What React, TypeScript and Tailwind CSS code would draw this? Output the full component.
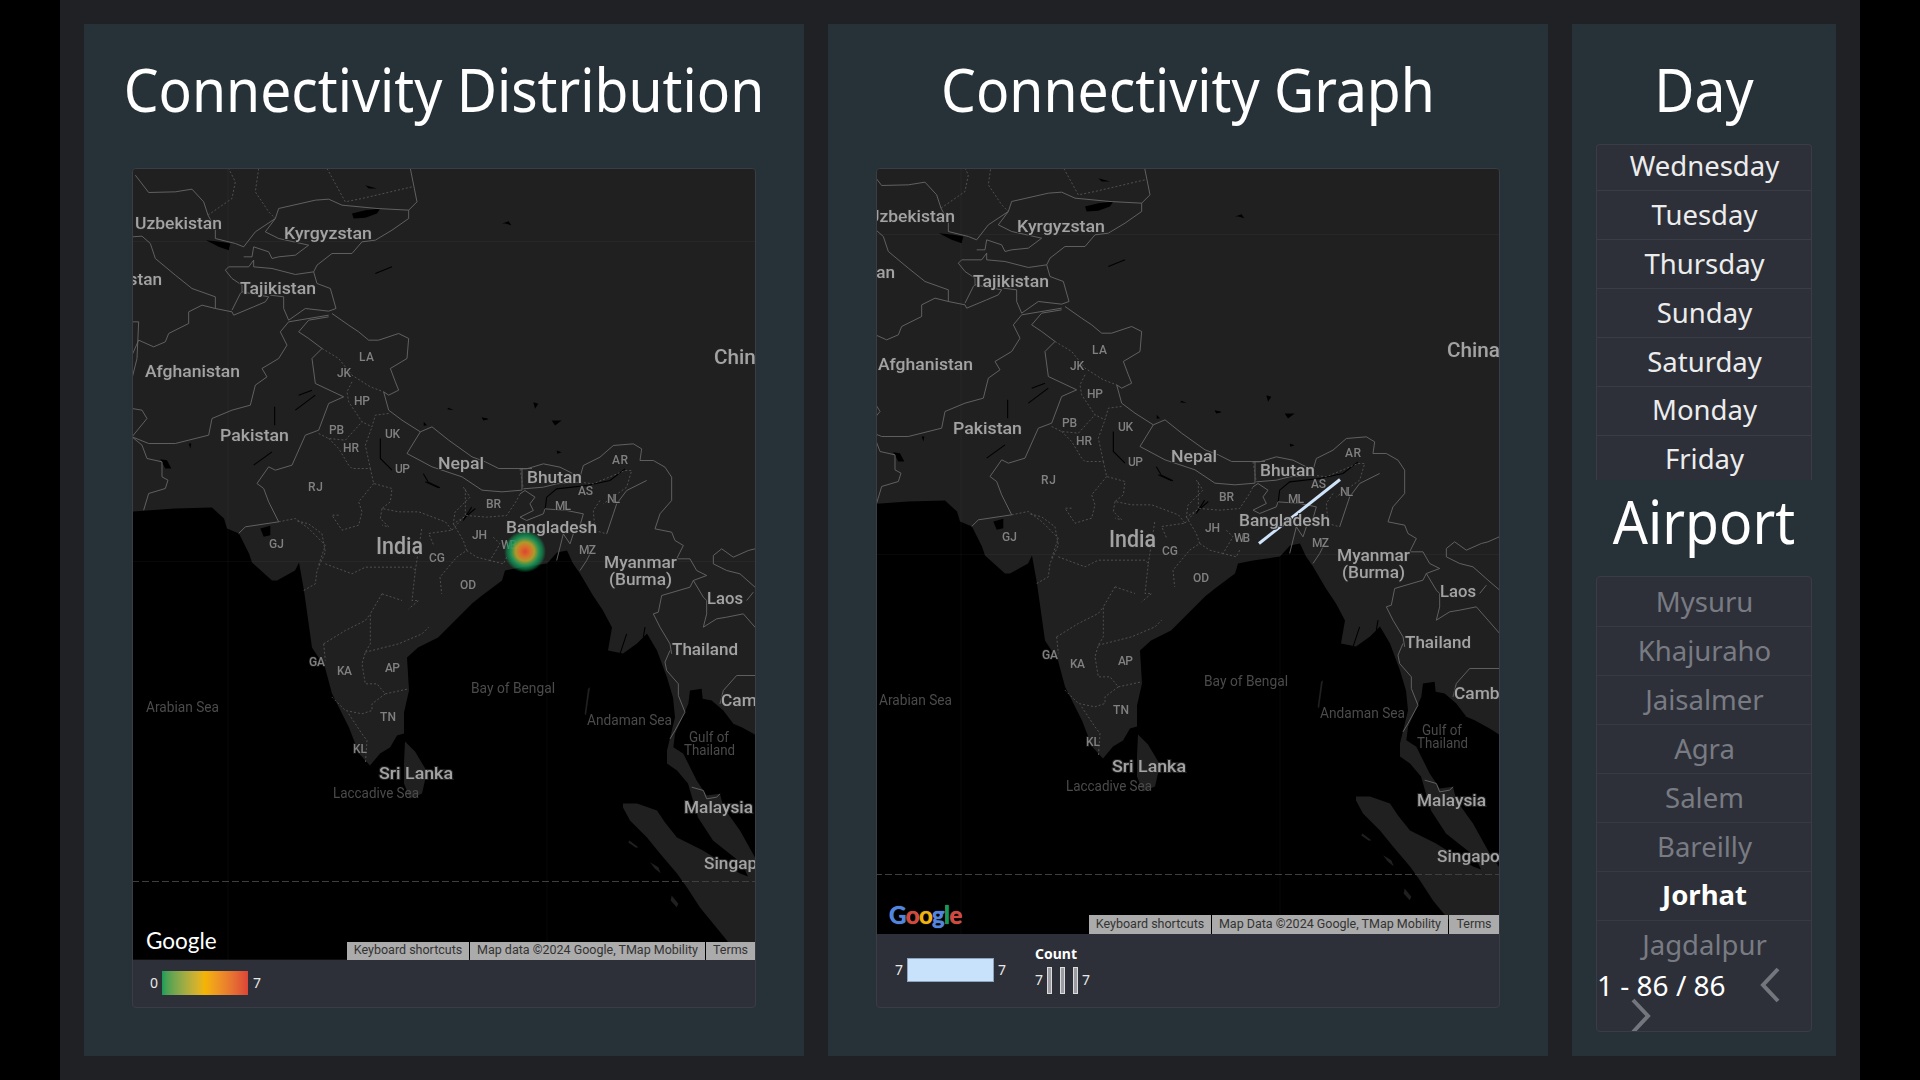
import React from "react";

type Pts = number[];
const d = (p: Pts, close = false) => {
  let s = "";
  for (let i = 0; i < p.length; i += 2) s += (i ? "L" : "M") + p[i] + " " + p[i + 1];
  return s + (close ? "Z" : "");
};

const OCEAN: Pts = [0,343,43,340,80,339,92,350,95,360,107,365,117,385,120,394,140,412,145,412,163,402,167,394,172,422,180,479,193,499,200,525,217,559,227,585,238,597,248,585,258,579,265,567,272,565,272,544,277,522,275,489,286,479,306,469,340,435,350,427,370,412,373,402,388,399,415,395,425,384,435,382,441,395,448,405,461,427,471,442,480,459,476,482,491,485,505,475,515,465,525,482,535,509,541,529,543,549,535,582,535,595,545,602,556,615,561,632,566,649,581,672,610,695,616,708,608,705,571,682,545,669,533,654,525,642,505,635,491,635,491,639,498,652,515,669,528,685,545,705,555,719,568,739,595,772,605,791,0,791];
const GULF: Pts = [390,150,425,145,428,175,455,180,490,210,520,250,545,260,590,285,660,330,660,760,590,660,540,570,490,500,480,460,440,465,410,420,395,390,370,340,340,320,345,280,372,220,385,190];
const SRI: Pts = [273,573,283,583,295,603,290,625,278,630,272,615,272,595];

const Z8_SOLID: Pts[] = [
  [10,20,50,72,130,70,180,62,215,100,228,140,250,180,250,210,310,225,335,235,370,190,430,150],
  [0,205,30,203,55,225,70,270,130,320,180,360,250,385,250,420,300,430,305,440,365,415,400,400,410,385,330,370,325,375,300,425],
  [280,305,290,295,350,295,365,275,365,295,420,300,490,318,545,310,555,345,595,360,612,420,590,428,520,420,470,455,455,420,455,385,415,380],
  [280,305,300,330,330,350,330,370],
  [430,150,440,120,550,95,590,92,630,110,735,120,830,125,830,150,780,185,730,215,690,220,660,255,600,255,555,290,545,310],
  [430,150,400,190,440,210,530,230,490,260,440,265,420,270,410,250,365,235,360,265,335,265],
  [830,125,855,100,835,0],
  [0,805,50,825,130,825,230,800,240,750,300,725,355,710,370,650,405,625,390,600,440,570,465,530,445,490,470,460,590,440],
  [0,805,45,750,30,725,0,720],
  [0,560,20,515,65,535,100,520,110,495,170,465,170,430,210,410,250,420],
  [0,460,20,460,15,570,0,630],
  [0,805,30,830,45,870,90,880,90,925,108,935,100,960,50,975,35,1025],
  [440,1060,410,1000,395,960,375,945,410,895,430,905,480,890,520,800,560,785,590,705,635,685,550,645,540,570,570,540,530,510,500,490,530,455,590,445],
  [600,435,650,470,680,490,710,515,740,515,800,495,830,510,825,570,775,600,790,640,800,665,770,680,755,670,770,725,810,755,865,790,825,855],
  [825,855,900,895,990,925,1050,965,1110,970,1170,965,1170,900,1200,900],
  [865,790,900,775,950,815,1020,865,1060,880,1100,900,1170,900],
  [440,1060,340,1075,320,1095],
];
const Z8_DASH: Pts[] = [
  [228,140,300,90,310,40,290,0],
  [380,0,370,70,410,130,430,150],
  [585,0,640,100,690,90,840,55],
  [570,540,620,570,660,620,715,655,755,670],
  [660,640,645,670,650,700,690,760,720,775,730,740,770,735],
  [560,795,590,810,640,815,690,760],
  [590,810,620,840,650,890,660,900,715,900,700,830,720,775],
  [715,900,725,945,780,960,775,1000,750,1020,800,1030,860,1030,940,1060,960,1085,890,1095,905,1130],
  [725,945,680,1000,690,1030,680,1070,630,1085,600,1040,620,1040],
  [440,1060,490,1050,530,1080,580,1130,560,1190],
  [750,1020,745,1050,770,1075,750,1070],
  [960,1085,1000,1040,1000,960],
];
const Z9_SOLID: Pts[] = [
  [480,205,500,205,550,190,600,200,660,230,670,195,720,170,760,135,820,130,845,145,840,180,880,180,915,200,935,230,935,300,900,340,885,385,935,395,945,420,970,435,950,475,990,475,1010,510,1040,525,1000,540,990,560,905,585,895,635,880,640,900,680,930,730,935,760],
  [490,265,550,260,590,250,660,245],
  [480,280,495,270,525,290,510,310,520,330,480,350,500,360,550,340,555,325,620,330,670,340,660,375,640,400,630,430,610,400,590,480],
  [740,400,760,340,770,310,800,270,860,240],
  [700,440,680,480,660,510],
  [1060,465,1085,445,1120,470,1165,450,1185,445,1230,425],
  [1060,465,1060,490,1100,510,1140,520,1185,560,1220,590],
  [1000,540,1030,590,1040,600,1040,640,1030,680,1070,655,1100,650,1150,640,1185,680,1220,720],
  [1180,575,1160,600],
  [1220,825,1130,825,1090,870,1080,910],
];
const Z9_DASH: Pts[] = [
  [480,205,490,265],
  [660,245,700,250,795,210,815,210,800,260,730,310],
  [720,300,700,330,705,390,740,400],
  [310,260,330,290,285,335,280,370,320,345,380,350,440,345,470,300,480,280],
  [280,370,310,420,320,450,290,470,240,530,245,580],
  [400,410,420,430,390,480,430,490,440,470],
  [320,450,350,470,390,480],
];
const Z10_SOLID: Pts[] = [
  [330,30,315,65,320,90,355,130,355,165,375,215,345,270,330,295],
  [395,440,430,450,440,475,470,470,480,460],
];
const Z11_DASH: Pts[] = [
  [515,210,550,190,555,150,580,95,570,40,530,10,490,0],
  [580,130,660,160,700,140,840,140,850,150,840,240,860,240,830,265],
  [850,150,870,20],
  [750,220,810,240],
  [750,220,715,280,715,370,700,395,690,430,700,490,735,490,760,520,720,550,720,570,690,580,640,570,600,530],
  [700,395,800,370,870,340,890,320],
  [575,370,640,330,700,300,715,280],
  [575,370,580,420],
  [760,520,830,505],
  [650,580,690,640,705,660,700,730],
];
const Z8_BLACK: Pts[] = [
  [660,135,700,125,745,120,735,135,700,148,665,150],
  [222,215,265,220,295,225,290,245,260,235],
  [85,872,105,875,118,900,100,900],
  [385,1080,415,1072,415,1100,395,1105],
  [1110,165,1130,158,1138,170,1120,165],
  [700,50,735,60,710,60],
  [950,718,965,725,945,722],
  [1050,748,1070,752,1055,755],
  [170,825,178,825,175,840],
  [875,760,885,770,875,772],
];
const Z8_RIVER: Pts[] = [
  [745,810,745,870,780,905],
  [1030,1020,995,1050],
  [500,680,540,665],
  [490,725,550,680],
  [428,715,428,770],
  [730,315,780,295],
  [880,940,920,958],
  [365,890,420,850],
];
const Z9_RIVER: Pts[] = [
  [795,205,750,240,680,255,590,265,560,290,555,330],
  [310,360,335,320],
  [190,220,205,245,240,262],
  [855,680,850,710],
  [800,700,780,760],
];
const Z9_BLACK: Pts[] = [
  [575,60,605,60,585,75],
  [590,150,605,155,592,160],
  [520,5,535,10,525,25],
  [365,50,385,55,370,60],
];

type L = [string, number, number, number, number?];
const COUNTRY: L[] = [
  ["Uzbekistan",3,90,60],["Kyrgyzstan",152,240,70],["Turkmenistan",-76,30,116],["Tajikistan",108,184,125],
  ["Afghanistan",13,108,208],["Pakistan",88,157,272],["Nepal",306,352,300],["Bhutan",395,450,314],
  ["Bangladesh",374,465,364],["Myanmar",472,545,399],["(Burma)",477,540,416],["Laos",575,611,435],
  ["Thailand",540,606,486],["Cambodia",589,668,537],["Singapore",572,650,700],["Malaysia",552,621,644],
  ["Sri Lanka",247,321,610],["China",582,635,195,21],["India",244,291,385,23],
];
const SEA: L[] = [
  ["Arabian Sea",14,87,543],["Bay of Bengal",339,423,524],["Andaman Sea",455,540,556],
  ["Gulf of",557,597,573],["Thailand",552,603,586],["Laccadive Sea",201,287,629],
];
const STATE: L[] = [
  ["LA",227,242,192],["JK",205,219,208],["HP",222,238,236],["PB",197,212,265],["HR",211,227,283],["UK",253,268,269],
  ["UP",263,278,304],["RJ",176,191,322],["BR",354,369,339],["JH",340,355,370],["GJ",137,152,379],["CG",297,313,393],
  ["WB",369,385,380],["OD",328,344,420],["AR",480,496,295],["AS",446,461,326],["NL",475,488,334],["ML",423,439,341],
  ["MZ",447,464,385],["GA",177,193,497],["KA",205,220,506],["AP",253,268,503],["TN",248,264,552],["KL",221,235,584],
];

function Lines({ sets, dash }: { sets: Pts[]; dash?: boolean }) {
  return (
    <>
      {sets.map((p, i) => (
        <path
          key={i}
          d={d(p)}
          fill="none"
          stroke={dash ? "#5c5c5c" : "#686868"}
          strokeWidth={dash ? 0.8 : 0.9}
          strokeDasharray={dash ? "2 2" : undefined}
          strokeLinejoin="round"
          vectorEffect="non-scaling-stroke"
        />
      ))}
    </>
  );
}

function Blacks({ polys, rivers }: { polys: Pts[]; rivers: Pts[] }) {
  return (
    <>
      {polys.map((p, i) => <path key={i} d={d(p, true)} fill="#000" />)}
      {rivers.map((p, i) => (
        <path key={"r" + i} d={d(p)} fill="none" stroke="#000" strokeWidth={1.1} vectorEffect="non-scaling-stroke" />
      ))}
    </>
  );
}

const Z8 = "scale(0.33333)";
const Z9 = "translate(228 232) scale(0.33333)";
const Z10 = "translate(428 472) scale(0.33333)";
const Z11 = "translate(0 352) scale(0.33333)";

function GeoMap({ viewBox, h, children, over }: { viewBox: string; h: number; children?: React.ReactNode; over?: React.ReactNode }) {
  return (
    <svg viewBox={viewBox} width={624} height={h} className="block blur-[0.35px]">
      <rect x="-20" y="-20" width="680" height="840" fill="#202020" />
      <path d={d(OCEAN, true)} fill="#000" />
      <g transform={Z10}>
        <path d={d(GULF, true)} fill="#000" />
        <path d="M208 600L235 620L228 622L205 606Z" fill="#202020" />
        <path d="M270 665L295 680L302 698L285 685Z" fill="#202020" />
        <path d="M335 765L355 790L350 800L332 780Z" fill="#202020" />
        <path d="M90 140L78 225L74 220L84 145Z" fill="#202020" />
      </g>
      <path d={d(SRI, true)} fill="#202020" />
      <path d="M0 713H640" stroke="#3f3f3f" strokeWidth="1" strokeDasharray="7 3" />
      <path d="M96 0V791M415 395V791" stroke="#fff" strokeOpacity="0.035" />
      <path d="M0 73H640M0 393H640" stroke="#fff" strokeOpacity="0.03" />
      <g transform={Z8}>
        <Blacks polys={Z8_BLACK} rivers={Z8_RIVER} />
        <Lines sets={Z8_SOLID} />
        <Lines sets={Z8_DASH} dash />
      </g>
      <g transform={Z9}>
        <Blacks polys={Z9_BLACK} rivers={Z9_RIVER} />
        <Lines sets={Z9_SOLID} />
        <Lines sets={Z9_DASH} dash />
      </g>
      <g transform={Z10}><Lines sets={Z10_SOLID} /></g>
      <g transform={Z11}><Lines sets={Z11_DASH} dash /></g>
      {children}
      <g fontFamily="Roboto, sans-serif">
        {SEA.map(([t, a, b, y]) => (
          <text key={t + a} x={a} y={y} textLength={b - a} lengthAdjust="spacingAndGlyphs" fontSize="14" fill="#4b4b4b">{t}</text>
        ))}
        {STATE.map(([t, a, b, y]) => (
          <text key={t} x={a} y={y} textLength={b - a} lengthAdjust="spacing" fontSize="12" fontWeight="500" fill="#808080" stroke="#212121" strokeOpacity="0.7" strokeWidth="1.5" paintOrder="stroke">{t}</text>
        ))}
        {COUNTRY.map(([t, a, b, y, s]) => (
          <text key={t + a} x={a} y={y} textLength={b - a} lengthAdjust="spacingAndGlyphs" fontSize={s ?? 17} fontWeight="500" fill="#a3a3a3" stroke="#262626" strokeOpacity="0.85" strokeWidth="2.2" paintOrder="stroke">{t}</text>
        ))}
      </g>
      {over}
    </svg>
  );
}

function Attribution({ h, w1, w2, w3, data }: { h: string; w1: string; w2: string; w3: string; data: string }) {
  const cell = "flex items-center justify-center h-full pb-[1px] bg-[#ababab] text-[#333] font-['Roboto'] text-[12.5px] leading-none whitespace-nowrap overflow-hidden";
  return (
    <div className={"absolute right-0 bottom-0 flex gap-px " + h}>
      <div className={cell + " " + w1}>Keyboard shortcuts</div>
      <div className={cell + " " + w2}>{data}</div>
      <div className={cell + " " + w3}>Terms</div>
    </div>
  );
}

function Chevron({ left, className }: { left?: boolean; className?: string }) {
  return (
    <svg width="20" height="36" viewBox="0 0 20 36" className={className}>
      <path d={left ? "M18 2L3 18L18 34" : "M2 2L17 18L2 34"} fill="none" stroke="#74767d" strokeWidth="4" />
    </svg>
  );
}

const DAYS = ["Tuesday", "Thursday", "Sunday", "Saturday", "Monday", "Friday"];
const AIRPORTS = ["Khajuraho", "Jaisalmer", "Agra", "Salem", "Bareilly", "Jorhat", "Jagdalpur"];

function Heading({ children, pt = "pt-[33px]", pb }: { children: React.ReactNode; pt?: string; pb: string }) {
  return (
    <h2 className={`text-center text-white text-[55.2px] leading-[64px] font-normal whitespace-nowrap -mx-12 ${pt} ${pb}`}>
      <span className="inline-block scale-y-[1.08] origin-[50%_68%] translate-y-[1px]">{children}</span>
    </h2>
  );
}

export default function App() {
  return (
    <div className="min-h-screen bg-black font-['Noto_Sans',sans-serif]">
      <div className="mx-auto w-[1800px] h-[1080px] bg-[#1f2125] pt-6 pl-6 flex gap-6">
        <section className="w-[720px] h-[1032px] bg-[#273238] px-12">
          <Heading pb="pb-[47px]">Connectivity Distribution</Heading>
          <div className="h-[840px] bg-[#2d3039] border border-[#3a3d46] rounded-[4px] overflow-hidden">
            <div className="relative h-[791px]">
              <GeoMap
                viewBox="1 0.5 624 791"
                h={791}
                over={
                  <>
                    <defs>
                      <radialGradient id="heat">
                        <stop offset="0" stopColor="#d9482f" />
                        <stop offset="0.25" stopColor="#d9702a" />
                        <stop offset="0.45" stopColor="#b5a02a" stopOpacity="0.95" />
                        <stop offset="0.68" stopColor="#1f9a5c" stopOpacity="0.9" />
                        <stop offset="0.85" stopColor="#0f9d58" stopOpacity="0.55" />
                        <stop offset="1" stopColor="#0f9d58" stopOpacity="0" />
                      </radialGradient>
                    </defs>
                    <circle cx="393" cy="383" r="21" fill="url(#heat)" />
                  </>
                }
              />
              <span className="absolute left-[13px] bottom-[5px] font-['Lato'] text-[22.5px] leading-[28px] text-white">Google</span>
              <Attribution h="h-[18px]" w1="w-[122px]" w2="w-[235px]" w3="w-[49px]" data="Map data ©2024 Google, TMap Mobility" />
            </div>
            <div className="flex items-center pl-[17px] pt-[11px] text-[14px] leading-none text-[#e8e8e8]">
              <span>0</span>
              <div className="w-[86px] h-[24px] ml-[4px] mr-[5px] bg-gradient-to-r from-[#0f9d58] via-[#f4b400] to-[#db4437]" />
              <span>7</span>
            </div>
          </div>
        </section>

        <section className="w-[720px] h-[1032px] bg-[#273238] px-12">
          <Heading pb="pb-[47px]">Connectivity Graph</Heading>
          <div className="h-[840px] bg-[#2d3039] border border-[#3a3d46] rounded-[4px] overflow-hidden">
            <div className="relative h-[765px]">
              <GeoMap viewBox="12 7.5 624 765" h={765}>
                <path d="M394 382L475 318" stroke="#cfe3fa" strokeWidth="3" />
              </GeoMap>
              <span className="absolute left-[12px] bottom-[4px] font-['Lato'] font-bold text-[24px] leading-[30px] tracking-[-0.6px] [text-shadow:0_0_1px_#999]">
                <span className="text-[#4c86e8]">G</span>
                <span className="text-[#db4437]">o</span>
                <span className="text-[#f4b400]">o</span>
                <span className="text-[#4c86e8]">g</span>
                <span className="text-[#0f9d58]">l</span>
                <span className="text-[#db4437]">e</span>
              </span>
              <Attribution h="h-[19px]" w1="w-[122px]" w2="w-[236px]" w3="w-[50px]" data="Map Data ©2024 Google, TMap Mobility" />
            </div>
            <div className="flex pl-[18px] text-[14px] leading-none text-[#e8e8e8]">
              <div className="flex items-center mt-[24px] h-[24px]">
                <span>7</span>
                <div className="w-[87px] h-[24px] mx-[4px] bg-[#c9e2fb] border border-[#8ea3bc]" />
                <span>7</span>
              </div>
              <div className="ml-[29px] mt-[11px]">
                <div className="font-bold text-white leading-[18px]">Count</div>
                <div className="flex items-center h-[28px] mt-[3px]">
                  <span>7</span>
                  <div className="w-[5px] h-[27px] ml-[4px] border border-[#dcdcdc] bg-[#9a9ca2]" />
                  <div className="w-[5px] h-[27px] ml-[8px] border border-[#dcdcdc] bg-[#9a9ca2]" />
                  <div className="w-[5px] h-[27px] ml-[8px] border border-[#dcdcdc] bg-[#9a9ca2]" />
                  <span className="ml-[4px]">7</span>
                </div>
              </div>
            </div>
          </div>
        </section>

        <section className="w-[264px] h-[1032px] bg-[#273238] px-6">
          <Heading pb="pb-[23px]">Day</Heading>
          <div className="h-[336px] overflow-hidden bg-[#2d3039] border-x border-t border-[#3a3d46] rounded-t-[4px] text-center text-[27.5px] text-[#ececec] pl-[1px]">
            <div className="h-[45px] leading-[41px]">Wednesday</div>
            {DAYS.map((t) => (
              <div key={t} className={`h-[49px] -ml-[1px] pl-[1px] border-t border-[#3a3d46] ${t === "Monday" || t === "Friday" ? "leading-[45px]" : "leading-[47px]"}`}>{t}</div>
            ))}
          </div>
          <Heading pt="pt-[9px]" pb="pb-[23px]">Airport</Heading>
          <div className="h-[456px] bg-[#2d3039] border border-[#3a3d46] rounded-[4px] overflow-hidden">
            <div className="h-[393px] overflow-hidden text-center text-[27.5px] text-[#797b83] pl-[1px]">
              <div className="h-[49px] leading-[50px]">Mysuru</div>
              {AIRPORTS.map((t) => (
                <div key={t} className={`h-[49px] -ml-[1px] pl-[1px] border-t border-[#373a43] ${t === "Jorhat" ? "font-bold text-white leading-[45px]" : "leading-[47px]"}`}>{t}</div>
              ))}
            </div>
            <div className="flex flex-wrap items-center text-[28px] leading-[30px] text-white content-start -mt-[3px]">
              <span>1 - 86 / 86</span>
              <Chevron left className="ml-[34px]" />
              <Chevron className="ml-[34px] -mt-[5px]" />
            </div>
          </div>
        </section>
      </div>
    </div>
  );
}
